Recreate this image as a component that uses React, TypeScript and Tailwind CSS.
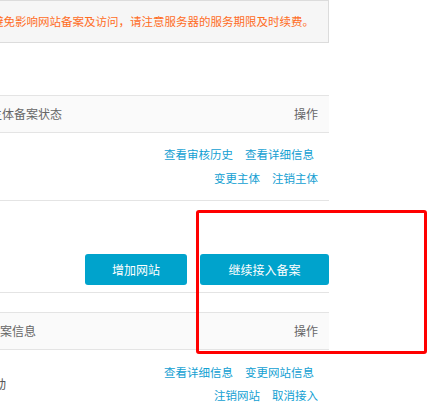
const font = { fontFamily: '"Noto Sans CJK SC", "Noto Sans", sans-serif' };

const siteLinks = [
  ["查看详细信息", "变更网站信息"],
  ["注销网站", "取消接入"],
];

const ownerLinks = [
  ["查看审核历史", "查看详细信息"],
  ["变更主体", "注销主体"],
];

function LinkRows({ rows }: { rows: string[][] }) {
  return (
    <div className="flex flex-col items-end pr-[11px]">
      {rows.map((row, i) => (
        <div key={i} className={`flex gap-[12px] h-[23.5px] items-center ${i === 0 ? "mr-[4px]" : ""}`}>
          {row.map((l) => (
            <a key={l} className="text-[11.5px] text-[#12a0d2] cursor-pointer whitespace-nowrap">
              {l}
            </a>
          ))}
        </div>
      ))}
    </div>
  );
}

export default function App() {
  return (
    <div className="relative w-[435px] h-[414px] overflow-hidden bg-white" style={font}>
      <div className="ml-[-60px] w-[389px]">
        {/* notice */}
        <div className="h-[43px] border border-[#dcdcdc] bg-[#f6f6f6] flex items-center pl-[51px]">
          <p className="text-[11.5px] text-[#ff6d1f] whitespace-nowrap">
            避免影响网站备案及访问，请注意服务器的服务期限及时续费。
          </p>
        </div>

        {/* owner table */}
        <div className="mt-[52px] h-[38px] border-y border-[#e4e4e4] bg-[#fafafa] flex items-center justify-between pl-[50px] pr-[11px] text-[12px] text-[#666]">
          <span>主体备案状态</span>
          <span>操作</span>
        </div>
        <div className="h-[68px] border-b border-[#e4e4e4] flex items-center justify-end">
          <LinkRows rows={ownerLinks} />
        </div>

        {/* actions */}
        <div className="h-[92px] border-b border-[#e4e4e4] flex items-end justify-end gap-[13px] pb-[7px]">
          <button className="w-[102px] h-[31px] rounded-[3px] bg-[#00a3cc] text-white text-[12px]">增加网站</button>
          <button className="w-[129px] h-[31px] rounded-[3px] bg-[#00a3cc] text-white text-[12px]">继续接入备案</button>
        </div>

        {/* site table */}
        <div className="mt-[19px] h-[38px] border-y border-[#e4e4e4] bg-[#fafafa] flex items-center justify-between pl-[24px] pr-[11px] text-[12px] text-[#666]">
          <span>网站备案信息</span>
          <span>操作</span>
        </div>
        <div className="h-[64px] flex items-center justify-between pl-[42px] pt-[4px]">
          <span className="text-[12px] text-[#555] whitespace-nowrap">活动</span>
          <LinkRows rows={siteLinks} />
        </div>
      </div>

      {/* highlight */}
      <div className="absolute left-[196px] top-[210px] w-[231px] h-[144px] border-[3px] border-[#ff0000] rounded-[3px]" />
    </div>
  );
}
